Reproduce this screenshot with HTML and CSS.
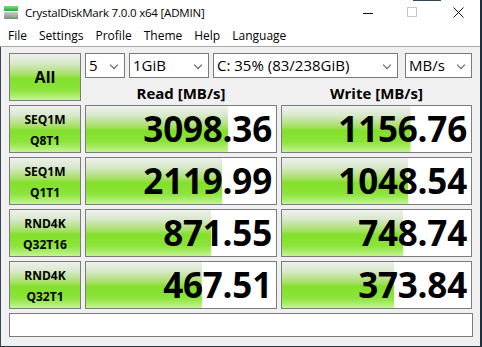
FILE: index.html
```html
<!DOCTYPE html>
<html>
<head>
<meta charset="utf-8">
<link rel="stylesheet" href="styles.css">
</head>
<body>
<div class="window">
  <div class="titlebar">
    <svg class="appicon" width="16" height="16" viewBox="0 0 16 16">
      <defs>
        <linearGradient id="gb" x1="0" y1="0" x2="0" y2="1">
          <stop offset="0" stop-color="#7ee07e"/>
          <stop offset="1" stop-color="#22a834"/>
        </linearGradient>
        <linearGradient id="gd" x1="0" y1="0" x2="0" y2="1">
          <stop offset="0" stop-color="#c8cec8"/>
          <stop offset="1" stop-color="#7d877f"/>
        </linearGradient>
      </defs>
      <rect x="0" y="1" width="14" height="5" fill="url(#gb)"/>
      <rect x="0" y="7" width="14" height="7" fill="url(#gd)"/>
      <rect x="9" y="10" width="3" height="2" fill="#6fe060"/>
    </svg>
    <span class="title">CrystalDiskMark 7.0.0 x64 [ADMIN]</span>
    <div class="controls">
      <span class="ctl min"></span>
      <span class="ctl max"></span>
      <svg class="ctl close" width="11" height="11" viewBox="0 0 11 11"><path d="M0.5 0.5 L10.5 10.5 M10.5 0.5 L0.5 10.5" stroke="#111" stroke-width="1"/></svg>
    </div>
    <span class="behind"></span>
  </div>
  <div class="menubar">
    <span>File</span><span>Settings</span><span>Profile</span><span>Theme</span><span>Help</span><span>Language</span>
  </div>
  <div class="client">
    <div class="btn all">All</div>
    <div class="topcell">
      <div class="selects">
        <div class="sel s1">5<i class="chev"></i></div>
        <div class="sel s2">1GiB<i class="chev"></i></div>
        <div class="sel s3">C: 35% (83/238GiB)<i class="chev"></i></div>
        <div class="sel s4">MB/s<i class="chev"></i></div>
      </div>
      <div class="heads"><span>Read [MB/s]</span><span>Write [MB/s]</span></div>
    </div>

    <div class="btn lbl"><span>SEQ1M</span><span>Q8T1</span></div>
    <div class="bar" style="--p:74.7%">3098.36</div>
    <div class="bar" style="--p:68%">1156.76</div>

    <div class="btn lbl"><span>SEQ1M</span><span>Q1T1</span></div>
    <div class="bar" style="--p:71.6%">2119.99</div>
    <div class="bar" style="--p:66.8%">1048.54</div>

    <div class="btn lbl"><span>RND4K</span><span>Q32T16</span></div>
    <div class="bar" style="--p:65.8%">871.55</div>
    <div class="bar" style="--p:64.2%">748.74</div>

    <div class="btn lbl"><span>RND4K</span><span>Q32T1</span></div>
    <div class="bar" style="--p:61%">467.51</div>
    <div class="bar" style="--p:59.5%">373.84</div>

    <div class="status"></div>
  </div>
</div>
</body>
</html>
```
FILE: styles.css
```css
* { box-sizing: border-box; }
html, body { margin: 0; padding: 0; }
body {
  width: 482px;
  height: 347px;
  overflow: hidden;
  background: #fff;
  font-family: "Open Sans", "Noto Sans", sans-serif;
  color: #000;
}
.window {
  width: 482px;
  height: 347px;
  border-right: 2px solid #1f2d3c;
  border-bottom: 1px solid #2a3644;
  display: flex;
  flex-direction: column;
  position: relative;
}
.titlebar {
  height: 24px;
  display: flex;
  align-items: center;
  padding-left: 4px;
  position: relative;
}
.appicon { margin-top: 2px; }
.title {
  font-size: 11.5px;
  letter-spacing: -0.2px;
  margin-left: 5px;
  margin-top: 1px;
}
.controls {
  margin-left: auto;
  display: flex;
  align-items: center;
  height: 24px;
}
.ctl { display: block; }
.min {
  width: 10px;
  height: 1px;
  background: #111;
  margin-right: 34px;
  margin-top: 2px;
}
.max {
  width: 10px;
  height: 10px;
  border: 1px solid #c8c8c8;
  margin-right: 36px;
}
.close { margin-right: 16px; margin-top: 1px; }
.behind {
  position: absolute;
  left: 413px;
  top: 0;
  width: 28px;
  height: 1px;
  background: #2f4a5a;
}
.menubar {
  height: 23px;
  display: flex;
  align-items: center;
  gap: 12px;
  padding-left: 8px;
  font-size: 12px;
  border-bottom: 1px solid #a9a9a9;
}
.client {
  flex: 1;
  background: #f0f0f0;
  border-left: 1px solid #3a4655;
  padding: 6px 8px 0 8px;
  display: grid;
  grid-template-columns: 72px 192px 191px;
  grid-template-rows: 48px 48px 48px 48px 48px 24px;
  gap: 4px;
}
.btn {
  border: 1px solid #7c7c7c;
  background: linear-gradient(to bottom, #eef0ec 0%, #d8e8cc 20%, #a8e068 44%, #82e02a 54%, #8ce43a 78%, #c4f492 100%);
  font-weight: 700;
  display: flex;
  flex-direction: column;
  align-items: center;
  justify-content: center;
}
.all { font-size: 16px; }
.lbl { font-size: 12px; line-height: 21px; padding-top: 1px; }
.topcell {
  grid-column: 2 / 4;
  display: flex;
  flex-direction: column;
}
.selects {
  height: 25px;
  display: flex;
  gap: 4px;
}
.sel {
  background: #fff;
  border: 1px solid #7a7a7a;
  height: 25px;
  font-size: 15px;
  line-height: 23px;
  padding-left: 3px;
  position: relative;
}
.s1 { width: 40px; }
.s2 { width: 80px; }
.s3 { width: 185px; }
.s4 { width: 67px; margin-left: 3px; }
.chev {
  position: absolute;
  right: 7px;
  top: 8px;
  width: 6px;
  height: 6px;
  border-right: 1px solid #555;
  border-bottom: 1px solid #555;
  transform: rotate(45deg);
}
.heads {
  display: grid;
  grid-template-columns: 192px 191px;
  gap: 4px;
  margin-top: 5px;
  font-size: 15px;
  font-weight: 700;
  line-height: 20px;
  text-align: center;
}
.bar {
  border: 1px solid #7c7c7c;
  background-color: #fff;
  background-image: linear-gradient(to bottom, #eef0ec 0%, #d8e8cc 20%, #a8e068 44%, #82e02a 54%, #8ce43a 78%, #c4f492 100%);
  background-size: var(--p) 100%;
  background-repeat: no-repeat;
  font-size: 35px;
  font-weight: 700;
  line-height: 46px;
  text-align: right;
  padding-right: 4px;
  letter-spacing: -0.2px;
}
.status {
  grid-column: 1 / 4;
  background: #fff;
  border: 1px solid #7c7c7c;
  width: 464px;
}
```
